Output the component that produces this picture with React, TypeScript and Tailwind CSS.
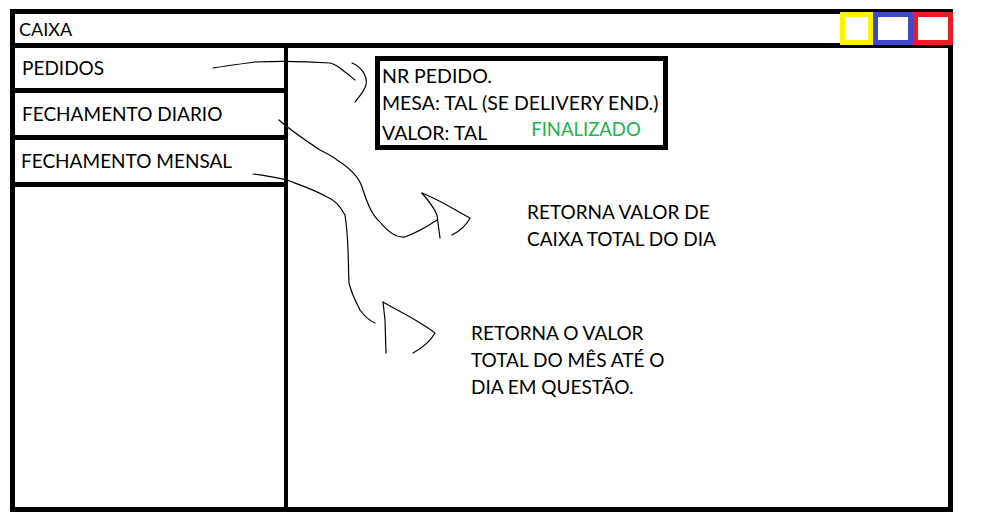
import React from "react";

const menu = [
  { label: "PEDIDOS", cls: "h-[45px] pl-[7px]" },
  { label: "FECHAMENTO DIARIO", cls: "h-[47px] pl-[7px]" },
  { label: "FECHAMENTO MENSAL", cls: "h-[47px] pl-[6px]" },
];

const Scribbles: React.FC = () => (
  <svg
    className="absolute inset-0 pointer-events-none"
    width={992}
    height={525}
    viewBox="0 0 992 525"
    fill="none"
    stroke="#000"
    strokeWidth={1.2}
    strokeLinecap="round"
    strokeLinejoin="round"
  >
    {/* pedidos -> detalhe do pedido */}
    <path d="M213 68 C225 66 240 64 255 62 C280 61 315 62 330 63 C338 65 342 70 345 72 C350 75 352 78 355 80" />
    <path d="M352 63 C360 66 368 75 366 85 C364 92 358 98 355 102" />
    {/* fechamento diario */}
    <path d="M279 120 C290 130 305 140 320 150 C330 155 335 158 337 160 C350 168 360 178 363 190 C368 205 372 215 380 222 C388 232 396 238 405 237 C413 234 425 228 437 220" />
    <path d="M422 193 C428 200 435 210 437 215 L440 238" />
    <path d="M422 193 C440 200 455 210 470 218 C466 226 458 232 452 235" />
    {/* fechamento mensal */}
    <path d="M253 174 C265 175 278 178 287 180 C300 185 315 190 325 196 C335 200 340 206 345 215 C349 240 348 265 349 283 C352 295 355 300 360 310 C366 318 370 321 375 323" />
    <path d="M383 302 L385 320 L386 353" />
    <path d="M383 302 C400 312 418 320 435 333 C430 342 422 348 413 353" />
  </svg>
);

export default function App() {
  return (
    <div className="relative w-[992px] h-[525px] bg-white overflow-hidden font-['Lato',sans-serif] text-black">
      <div className="ml-[10px] mt-[9px] w-[943px] h-[503px] border-[5px] border-black flex flex-col">
        {/* barra de titulo */}
        <div className="h-[34px] shrink-0 border-b-[5px] border-black flex items-start justify-between">
          <span className="pl-[4px] pt-[4px] text-[18px] leading-[22px]">CAIXA</span>
          <div className="flex -mt-[2px] -mr-[5px]">
            <div className="w-[33px] h-[33px] border-[5px] border-[#fff200]" />
            <div className="w-[40px] h-[33px] border-[5px] border-[#3f48cc]" />
            <div className="w-[40px] h-[33px] border-[5px] border-[#ed1c24]" />
          </div>
        </div>

        <div className="flex flex-1">
          {/* menu lateral */}
          <div className="w-[273px] shrink-0 border-r-4 border-black flex flex-col">
            {menu.map((m) => (
              <div
                key={m.label}
                className={`${m.cls} border-b-[5px] border-black flex items-center text-[19px]`}
              >
                {m.label}
              </div>
            ))}
          </div>

          {/* conteudo */}
          <div className="flex-1 flex flex-col">
            <div className="ml-[87px] mt-[8px] w-[293px] h-[94px] border-[5px] border-black pl-[2px] pt-[1px] text-[19.5px] leading-[27px]">
              <div>NR PEDIDO.</div>
              <div>MESA: TAL (SE DELIVERY END.)</div>
              <div className="flex items-center">
                <span>VALOR: TAL</span>
                <span className="ml-[44px] pb-[5px] text-[18.5px] text-[#22b14c]">FINALIZADO</span>
              </div>
            </div>

            <div className="ml-[239px] mt-[48px] text-[19px] leading-[27px]">
              <div>RETORNA VALOR DE</div>
              <div>CAIXA TOTAL DO DIA</div>
            </div>

            <div className="ml-[183px] mt-[67px] text-[19px] leading-[27px]">
              <div>RETORNA O VALOR</div>
              <div>TOTAL DO MÊS ATÉ O</div>
              <div>DIA EM QUESTÃO.</div>
            </div>
          </div>
        </div>
      </div>
      <Scribbles />
    </div>
  );
}
